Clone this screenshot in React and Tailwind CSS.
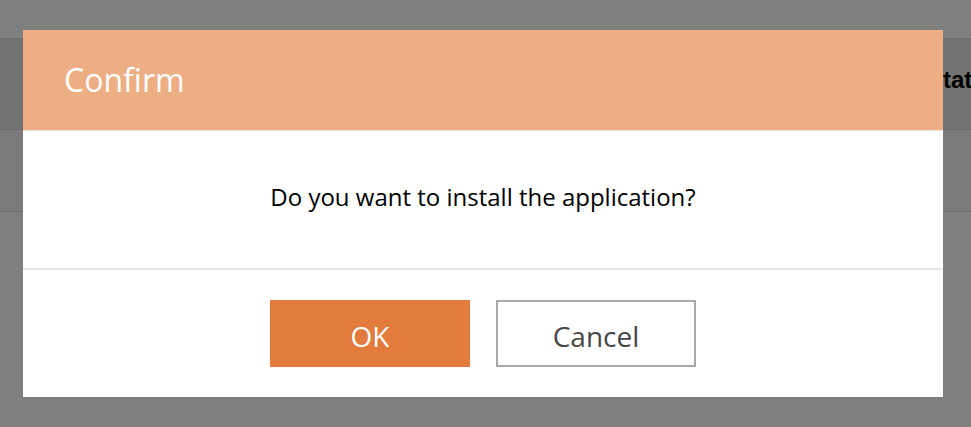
export default function App() {
  return (
    <div className="relative w-[971px] h-[427px] overflow-hidden bg-[#7f7f7f] font-['Open_Sans',sans-serif]">
      {/* dimmed page behind the dialog */}
      <div className="h-[38px]" />
      <div className="flex h-[92px] items-start border-y border-[#6c6c6c] bg-[#737373] pt-[23px] font-['Liberation_Sans',Arial,sans-serif] text-[24px] font-bold text-black whitespace-nowrap">
        <div className="w-[927px] shrink-0" />
        <div>Status</div>
      </div>
      <div className="h-[82px] border-b border-[#6c6c6c] bg-[#7b7b7b]" />

      {/* modal */}
      <div className="absolute left-[23px] top-[30px] w-[920px] bg-white">
        <div className="flex h-[101px] items-center border-b border-[#e9e3de] bg-[#ecae82] px-[41px] text-[32px] font-medium text-white">
          Confirm
        </div>
        <div className="flex h-[137px] items-center justify-center pb-[6px] text-[24px] text-black">
          Do you want to install the application?
        </div>
        <div className="flex justify-center gap-[26px] border-t-2 border-[#e6e6e6] py-[30px]">
          <button className="h-[67px] w-[200px] bg-[#e27b3c] pt-[4px] text-[28px] text-white">OK</button>
          <button className="h-[67px] w-[200px] border-2 border-[#a9a9a9] bg-white pt-[4px] text-[28px] text-[#474747]">Cancel</button>
        </div>
      </div>
    </div>
  );
}
